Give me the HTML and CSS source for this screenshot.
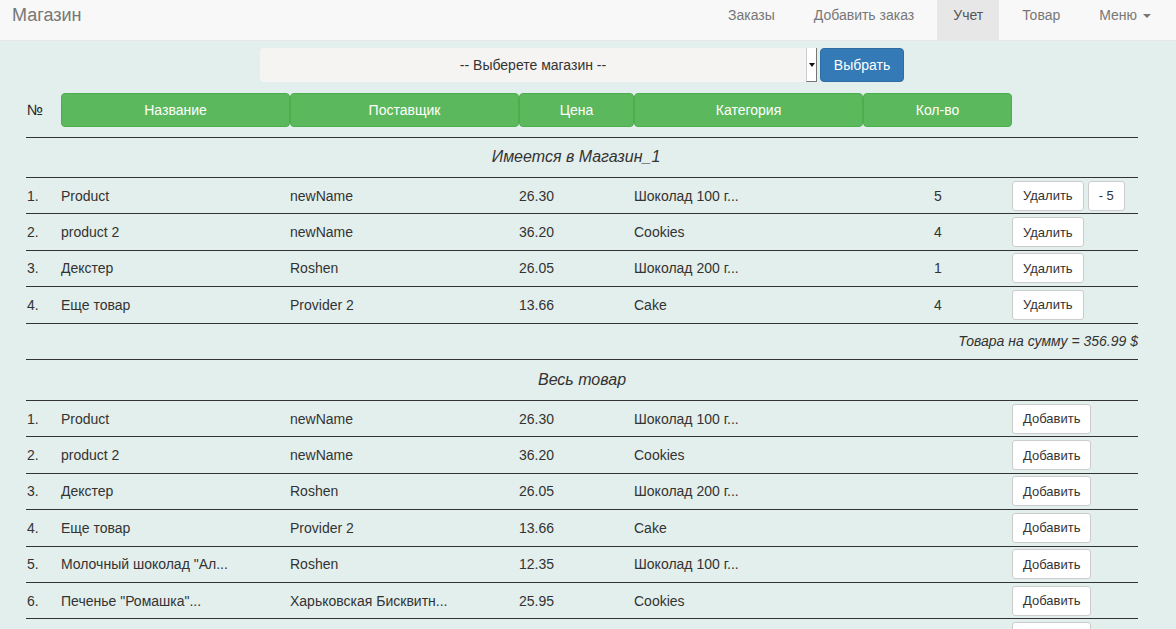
FILE: index.html
```html
<!DOCTYPE html>
<html lang="ru">
<head>
<meta charset="utf-8">
<title>Магазин</title>
<link rel="stylesheet" href="styles.css">
</head>
<body>
<nav class="navbar">
  <a class="brand" href="#">Магазин</a>
  <ul class="nav">
    <li><a href="#">Заказы</a></li>
    <li><a href="#">Добавить заказ</a></li>
    <li class="active"><a href="#">Учет</a></li>
    <li><a href="#">Товар</a></li>
    <li><a href="#">Меню <span class="caret"></span></a></li>
  </ul>
</nav>
<main class="page">
  <form class="picker">
    <div class="select">
      <span class="select-text">-- Выберете магазин --</span>
      <span class="select-arrow"></span>
    </div>
    <button type="button" class="btn-primary">Выбрать</button>
  </form>

  <div class="thead">
    <div class="num-head">№</div>
    <div class="th">Название</div>
    <div class="th">Поставщик</div>
    <div class="th">Цена</div>
    <div class="th">Категория</div>
    <div class="th">Кол-во</div>
  </div>

  <section class="group">
    <div class="group-title shop">Имеется в Магазин_1</div>
    <div class="row"><span>1.</span><span>Product</span><span>newName</span><span>26.30</span><span>Шоколад 100 г...</span><span class="qty">5</span><span class="acts"><button class="btn" type="button">Удалить</button><button class="btn" type="button">- 5</button></span></div>
    <div class="row"><span>2.</span><span>product 2</span><span>newName</span><span>36.20</span><span>Cookies</span><span class="qty">4</span><span class="acts"><button class="btn" type="button">Удалить</button></span></div>
    <div class="row"><span>3.</span><span>Декстер</span><span>Roshen</span><span>26.05</span><span>Шоколад 200 г...</span><span class="qty">1</span><span class="acts"><button class="btn" type="button">Удалить</button></span></div>
    <div class="row"><span>4.</span><span>Еще товар</span><span>Provider 2</span><span>13.66</span><span>Cake</span><span class="qty">4</span><span class="acts"><button class="btn" type="button">Удалить</button></span></div>
    <div class="summary">Товара на сумму = 356.99 $</div>
  </section>

  <section class="group">
    <div class="group-title tall">Весь товар</div>
    <div class="row"><span>1.</span><span>Product</span><span>newName</span><span>26.30</span><span>Шоколад 100 г...</span><span class="qty"></span><span class="acts"><button class="btn" type="button">Добавить</button></span></div>
    <div class="row"><span>2.</span><span>product 2</span><span>newName</span><span>36.20</span><span>Cookies</span><span class="qty"></span><span class="acts"><button class="btn" type="button">Добавить</button></span></div>
    <div class="row"><span>3.</span><span>Декстер</span><span>Roshen</span><span>26.05</span><span>Шоколад 200 г...</span><span class="qty"></span><span class="acts"><button class="btn" type="button">Добавить</button></span></div>
    <div class="row"><span>4.</span><span>Еще товар</span><span>Provider 2</span><span>13.66</span><span>Cake</span><span class="qty"></span><span class="acts"><button class="btn" type="button">Добавить</button></span></div>
    <div class="row"><span>5.</span><span>Молочный шоколад "Ал...</span><span>Roshen</span><span>12.35</span><span>Шоколад 100 г...</span><span class="qty"></span><span class="acts"><button class="btn" type="button">Добавить</button></span></div>
    <div class="row"><span>6.</span><span>Печенье "Ромашка"...</span><span>Харьковская Бисквитн...</span><span>25.95</span><span>Cookies</span><span class="qty"></span><span class="acts"><button class="btn" type="button">Добавить</button></span></div>
    <div class="row last"><span></span><span></span><span></span><span></span><span></span><span class="qty"></span><span class="acts"><button class="btn" type="button">Добавить</button></span></div>
  </section>
</main>
</body>
</html>
```

FILE: styles.css
```css
* { box-sizing: border-box; }

html, body {
  margin: 0;
  padding: 0;
}

body {
  background: #e3efec;
  font-family: "Liberation Sans", Arial, Helvetica, sans-serif;
  font-size: 14px;
  line-height: 20px;
  color: #333;
}

.navbar {
  display: flex;
  justify-content: space-between;
  align-items: stretch;
  height: 41px;
  background: #f8f8f8;
  border-bottom: 1px solid #e7e7e7;
  padding: 0 9px 0 12px;
}

.brand {
  font-size: 18px;
  line-height: 20px;
  color: #777;
  text-decoration: none;
  padding-top: 5px;
}

.nav {
  display: flex;
  gap: 7px;
  list-style: none;
  margin: 0;
  padding: 0;
}

.nav li a {
  display: block;
  height: 40px;
  padding: 5px 16px 0;
  color: #777;
  text-decoration: none;
  line-height: 20px;
}

.nav li.active a {
  background: #e7e7e7;
  color: #555;
}

.caret {
  display: inline-block;
  width: 0;
  height: 0;
  margin-left: 2px;
  vertical-align: middle;
  border-top: 4px solid #777;
  border-left: 4px solid transparent;
  border-right: 4px solid transparent;
}

.page {
  width: 1112px;
  margin-left: 26px;
  padding-top: 7px;
}

.picker {
  display: flex;
  justify-content: center;
  align-items: stretch;
  height: 34px;
  margin: 0;
}

.select {
  display: flex;
  width: 557px;
  background: #f5f4f2;
  border-radius: 4px 0 0 4px;
}

.select-text {
  flex: 1;
  text-align: center;
  line-height: 34px;
  color: #333;
}

.select-arrow {
  position: relative;
  width: 11px;
  background: #fff;
  border-left: 1px solid #ccc;
  border-right: 1px solid #777;
  border-bottom: 1px solid #777;
}

.select-arrow::after {
  content: "";
  position: absolute;
  left: 2px;
  top: 15px;
  border-top: 4px solid #111;
  border-left: 3px solid transparent;
  border-right: 3px solid transparent;
}

.btn-primary {
  width: 84px;
  margin-left: 3px;
  background: #337ab7;
  border: 1px solid #2e6da4;
  border-radius: 4px;
  color: #fff;
  font-family: inherit;
  font-size: 14px;
  padding: 0;
}

.thead {
  display: flex;
  height: 34px;
  margin-top: 11px;
  margin-bottom: 10px;
}

.num-head {
  width: 35px;
  padding-left: 1px;
  line-height: 33px;
  font-size: 15px;
  color: #222;
}

.th {
  background: #5cb85c;
  border: 1px solid #4cae4c;
  border-radius: 4px;
  color: #fff;
  text-align: center;
  line-height: 32px;
}

.th:nth-child(2) { width: 229px; }
.th:nth-child(3) { width: 229px; }
.th:nth-child(4) { width: 115px; }
.th:nth-child(5) { width: 229px; }
.th:nth-child(6) { width: 149px; }

.group-title {
  height: 40px;
  border-top: 1px solid #333;
  text-align: center;
  font-style: italic;
  font-size: 16px;
  line-height: 38px;
}

.group-title.shop {
  padding-right: 12px;
}

.group-title.tall {
  height: 41px;
  line-height: 39px;
}

.row {
  display: grid;
  grid-template-columns: 35px 229px 229px 115px 229px 149px 126px;
  align-items: center;
  height: 36.4px;
  border-top: 1px solid #333;
}

.row > span {
  padding-left: 1px;
  white-space: nowrap;
}

.row > span:nth-child(2),
.row > span:nth-child(3),
.row > span:nth-child(4),
.row > span:nth-child(5) {
  padding-left: 0;
}

.row .qty {
  text-align: center;
}

.row .acts {
  display: flex;
  gap: 4px;
  padding-left: 0;
}

.btn {
  height: 30px;
  padding: 0 10px;
  background: #fff;
  border: 1px solid #ccc;
  border-radius: 3px;
  font-family: inherit;
  font-size: 13px;
  color: #333;
}

.summary {
  height: 36.4px;
  border-top: 1px solid #333;
  text-align: right;
  font-style: italic;
  line-height: 34px;
}
```
